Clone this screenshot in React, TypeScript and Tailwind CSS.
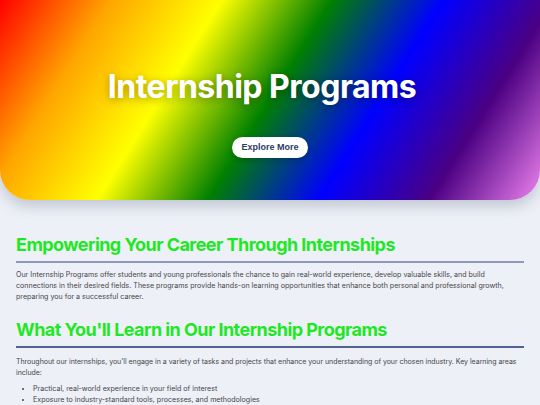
import React from 'react';

const learnItems = [
  "Practical, real-world experience in your field of interest",
  "Exposure to industry-standard tools, processes, and methodologies",
];

export default function App() {
  return (
    <div className="min-h-[405px] bg-[#edf0f7] font-['Inter',sans-serif] text-[#454545]">
      {/* Hero */}
      <header className="h-[200px] rounded-b-[30px] bg-[linear-gradient(122deg,red,orange,yellow,green,blue,indigo,violet)] shadow-[0_6px_14px_rgba(60,70,100,0.25)] flex flex-col items-center">
        <h1 className="mt-[66px] pr-[16px] text-[32px] leading-[42px] font-bold text-white tracking-[-0.5px] [text-shadow:0_2px_8px_rgba(0,0,0,0.35)]">
          Internship Programs
        </h1>
        <button className="mt-[29px] h-[21px] w-[76px] rounded-full bg-white text-[9px] font-bold text-[#2c3a66] font-['Liberation_Sans',sans-serif] shadow-[0_2px_6px_rgba(0,0,0,0.2)]">
          Explore More
        </button>
      </header>

      <main className="px-4 pt-[33px]">
        <section>
          <h2 className="text-[18px] leading-[24px] font-bold text-[#1ee823] tracking-[-0.55px]">
            Empowering Your Career Through Internships
          </h2>
          <div className="mt-[4px] h-[2px] w-full bg-[#8f9abb]" />
          <p className="mt-[6px] max-w-[500px] text-[7.1px] leading-[11px]">
            Our Internship Programs offer students and young professionals the chance to gain real-world experience, develop valuable skills, and build connections in their desired fields. These programs provide hands-on learning opportunities that enhance both personal and professional growth, preparing you for a successful career.
          </p>
        </section>

        <section className="mt-[16px]">
          <h2 className="text-[18px] leading-[24px] font-bold text-[#1ee823] tracking-[-0.55px]">
            What You'll Learn in Our Internship Programs
          </h2>
          <div className="mt-[4px] h-[2px] w-full bg-[#52638f]" />
          <p className="mt-[8px] text-[7px] leading-[11px] tracking-[-0.03px]">
            Throughout our internships, you'll engage in a variety of tasks and projects that enhance your understanding of your chosen industry. Key learning areas include:
          </p>
          <ul className="mt-[5px] list-disc pl-[17px] text-[7.1px] leading-[11px]">
            {learnItems.map((item) => (
              <li key={item}>{item}</li>
            ))}
          </ul>
        </section>
      </main>
    </div>
  );
}
